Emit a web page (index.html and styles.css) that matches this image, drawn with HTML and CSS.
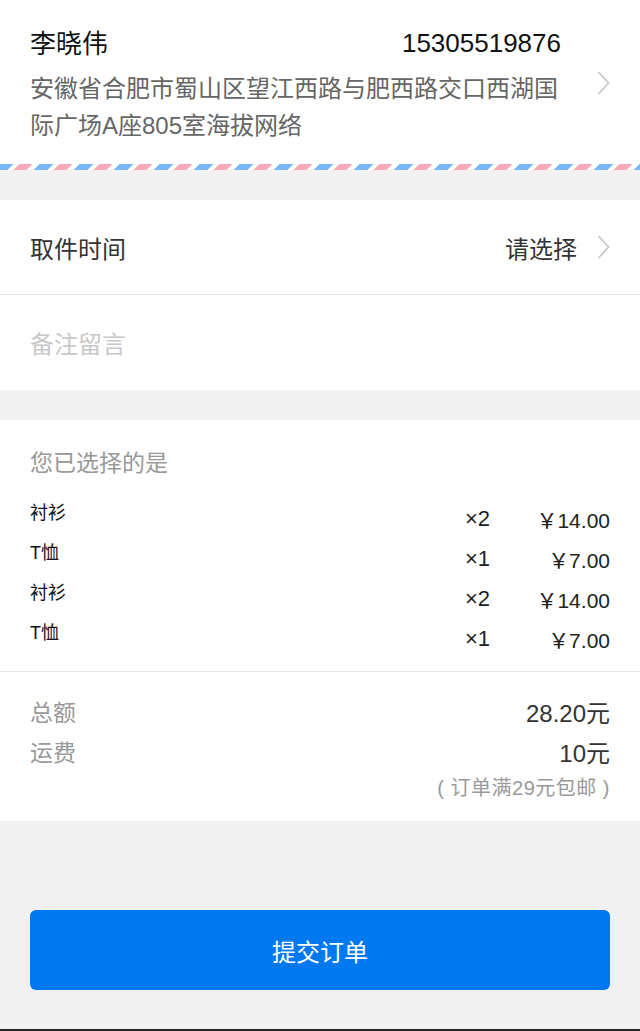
FILE: index.html
```html
<!DOCTYPE html>
<html lang="zh-CN">
<head>
<meta charset="utf-8">
<title>提交订单</title>
<link rel="stylesheet" href="styles.css">
</head>
<body>
<div class="page">
  <section class="address">
    <div class="address-body">
      <div class="address-info">
        <div class="contact">
          <span class="name">李晓伟</span>
          <span class="phone">15305519876</span>
        </div>
        <div class="addr-text">安徽省合肥市蜀山区望江西路与肥西路交口西湖国际广场A座805室海拔网络</div>
      </div>
      <svg class="chevron" width="13" height="24" viewBox="0 0 13 24"><polyline points="1.5,1 11.5,12 1.5,23" fill="none" stroke="#c8c8c8" stroke-width="1.8"/></svg>
    </div>
    <div class="airmail"></div>
  </section>

  <section class="block">
    <div class="row row-sep">
      <span class="row-label">取件时间</span>
      <span class="row-value">请选择
        <svg class="chevron" width="13" height="24" viewBox="0 0 13 24"><polyline points="1.5,1 11.5,12 1.5,23" fill="none" stroke="#c8c8c8" stroke-width="1.8"/></svg>
      </span>
    </div>
    <div class="row row-note">
      <span class="placeholder">备注留言</span>
    </div>
  </section>

  <section class="block selected">
    <div class="sel-title">您已选择的是</div>
    <div class="items">
      <div class="item"><span class="item-name">衬衫</span><span class="item-qty">×2</span><span class="item-price">￥14.00</span></div>
      <div class="item"><span class="item-name">T恤</span><span class="item-qty">×1</span><span class="item-price">￥7.00</span></div>
      <div class="item"><span class="item-name">衬衫</span><span class="item-qty">×2</span><span class="item-price">￥14.00</span></div>
      <div class="item"><span class="item-name">T恤</span><span class="item-qty">×1</span><span class="item-price">￥7.00</span></div>
    </div>
    <div class="totals">
      <div class="total-row"><span class="total-label">总额</span><span class="total-value">28.20元</span></div>
      <div class="total-row"><span class="total-label">运费</span><span class="total-value">10元</span></div>
      <div class="total-note">( 订单满29元包邮 )</div>
    </div>
  </section>

  <footer class="footer">
    <button class="submit" type="button">提交订单</button>
  </footer>
</div>
</body>
</html>
```

FILE: styles.css
```css
* { box-sizing: border-box; }
html, body { margin: 0; padding: 0; }
body {
  background: #f1f1f1;
  font-family: "Liberation Sans", "Noto Sans CJK SC", sans-serif;
  color: #333;
}
.page { width: 640px; }

.address { background: #fff; }
.address-body {
  display: flex;
  align-items: center;
  padding: 22px 30px 20px 30px;
}
.address-info { width: 536px; }
.contact {
  display: flex;
  justify-content: space-between;
  align-items: center;
  height: 38px;
  margin-bottom: 10px;
}
.name { font-size: 26px; color: #111; }
.phone { font-size: 26px; color: #111; padding-right: 5px; padding-top: 4px; }
.addr-text {
  font-size: 24px;
  line-height: 37px;
  color: #666;
}
.address-body .chevron { margin-left: auto; }
.chevron { display: block; flex: none; }
.airmail {
  height: 6px;
  background: repeating-linear-gradient(135deg,
    #7ab7f6 0, #7ab7f6 9.2px,
    #fff 9.2px, #fff 14.14px,
    #f6aab5 14.14px, #f6aab5 23.3px,
    #fff 23.3px, #fff 28.284px);
}

.block { background: #fff; margin-top: 30px; }
.row {
  display: flex;
  align-items: center;
  justify-content: space-between;
  padding: 0 30px;
  height: 95px;
}
.row-sep { border-bottom: 1px solid #e6e6e6; }
.row-note { height: 95px; }
.row-label { font-size: 24px; color: #333; }
.row-value {
  display: flex;
  align-items: center;
  gap: 20px;
  font-size: 24px;
  color: #333;
}
.placeholder { font-size: 24px; color: #c8c8c8; }

.selected { padding-top: 28px; }
.sel-title {
  padding: 0 30px;
  font-size: 23px;
  line-height: 30px;
  color: #999;
}
.items {
  margin-top: 20px;
  padding: 0 30px 13px 30px;
  border-bottom: 1px solid #e6e6e6;
}
.item {
  display: grid;
  grid-template-columns: 1fr 45px 100px;
  align-items: center;
  height: 40px;
}
.item-name {
  font-size: 18px;
  color: #111;
  margin-bottom: 16px;
}
.item-qty { font-size: 22px; color: #222; }
.item-price { font-size: 21px; color: #222; text-align: right; }

.totals { padding: 19px 30px 18px 30px; }
.total-row {
  display: flex;
  justify-content: space-between;
  align-items: center;
  height: 40px;
}
.total-label { font-size: 23px; color: #999; }
.total-value { font-size: 24px; color: #333; }
.total-note {
  margin-top: 2px;
  text-align: right;
  font-size: 20px;
  line-height: 30px;
  letter-spacing: 0.5px;
  color: #999;
}

.footer {
  padding: 89px 30px 39px 30px;
  border-bottom: 2px solid #262626;
}
.submit {
  display: block;
  width: 100%;
  height: 80px;
  border: none;
  border-radius: 6px;
  background: #0079f0;
  color: #fff;
  font-family: "Liberation Sans", "Noto Sans CJK SC", sans-serif;
  font-size: 24px;
}
```
